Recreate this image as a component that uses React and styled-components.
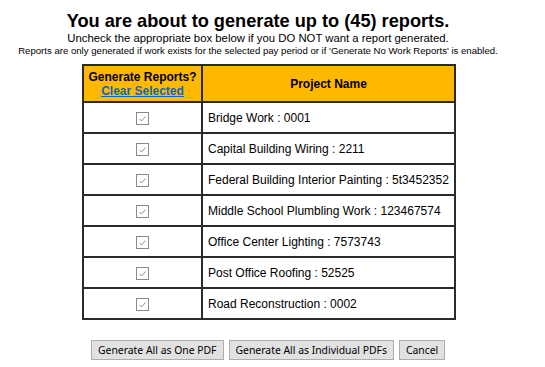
import React, { useState } from "react";
import styled, { createGlobalStyle } from "styled-components";

const Global = createGlobalStyle`
  html, body { margin: 0; padding: 0; background: #fff; }
  body { font-family: "Liberation Sans", Arial, sans-serif; color: #000; }
`;

const Page = styled.div`
  width: 545px;
  display: flex;
  flex-direction: column;
  align-items: flex-start;
  padding-top: 10px;
`;

const Header = styled.div`
  width: 516px;
  text-align: center;
`;

const Title = styled.h1`
  margin: 0;
  font-size: 18.2px;
  font-weight: bold;
  line-height: 22px;
`;

const Sub = styled.div`
  font-size: 11.33px;
  line-height: 13px;
`;

const Note = styled.div`
  font-size: 9.6px;
  line-height: 12px;
`;

const Table = styled.table`
  margin: 7px 0 0 82px;
  border-collapse: collapse;
  border: 2px solid #2b2b2b;
  width: 374px;
  table-layout: fixed;
`;

const Th = styled.th`
  background: #ffb800;
  border: 2px solid #2b2b2b;
  font-size: 12px;
  font-weight: bold;
  line-height: 14px;
  height: 35px;
  padding: 0 2px;
  text-align: center;
  width: ${(p) => p.$w || "auto"};
`;

const ClearLink = styled.a`
  color: #0b66c8;
  text-decoration: underline;
  cursor: pointer;
  display: block;
`;

const Td = styled.td`
  border: 2px solid #2b2b2b;
  height: 29px;
  font-size: 12px;
  padding: 0 5px;
  white-space: nowrap;
  text-align: ${(p) => (p.$center ? "center" : "left")};
  vertical-align: middle;
`;

const Box = styled.span`
  display: inline-block;
  width: 11px;
  height: 11px;
  border: 1px solid #8a8a8a;
  background: #fff;
  vertical-align: middle;
  position: relative;
  cursor: pointer;
  svg { position: absolute; left: 1px; top: 1px; }
`;

const Buttons = styled.div`
  display: flex;
  gap: 5px;
  margin: 20px 0 0 91px;
`;

const Button = styled.button`
  font-family: "Noto Sans", "Open Sans", sans-serif;
  font-size: 10.4px;
  line-height: 14px;
  padding: 2px 6px;
  background: #e1e1e1;
  border: 1px solid #adadad;
  color: #000;
  border-radius: 0;
`;

const projects = [
  "Bridge Work : 0001",
  "Capital Building Wiring : 2211",
  "Federal Building Interior Painting : 5t3452352",
  "Middle School Plumbling Work : 123467574",
  "Office Center Lighting : 7573743",
  "Post Office Roofing : 52525",
  "Road Reconstruction : 0002",
];

function Check({ checked, onClick }) {
  return (
    <Box onClick={onClick}>
      {checked && (
        <svg width="9" height="9" viewBox="0 0 9 9">
          <path d="M1.5 5 L3.5 7 L7.5 2.5" fill="none" stroke="#8f8ab0" strokeWidth="1" />
        </svg>
      )}
    </Box>
  );
}

export default function App() {
  const [checked, setChecked] = useState(projects.map(() => true));
  return (
    <>
      <Global />
      <Page>
        <Header>
          <Title>You are about to generate up to (45) reports.</Title>
          <Sub>Uncheck the appropriate box below if you DO NOT want a report generated.</Sub>
          <Note>
            Reports are only generated if work exists for the selected pay period or if 'Generate No Work Reports' is enabled.
          </Note>
        </Header>
        <Table>
          <thead>
            <tr>
              <Th $w="113px">
                Generate Reports?
                <ClearLink onClick={() => setChecked(projects.map(() => false))}>Clear Selected</ClearLink>
              </Th>
              <Th>Project Name</Th>
            </tr>
          </thead>
          <tbody>
            {projects.map((p, i) => (
              <tr key={p}>
                <Td $center>
                  <Check
                    checked={checked[i]}
                    onClick={() => setChecked(checked.map((c, j) => (j === i ? !c : c)))}
                  />
                </Td>
                <Td>{p}</Td>
              </tr>
            ))}
          </tbody>
        </Table>
        <Buttons>
          <Button>Generate All as One PDF</Button>
          <Button>Generate All as Individual PDFs</Button>
          <Button>Cancel</Button>
        </Buttons>
      </Page>
    </>
  );
}
